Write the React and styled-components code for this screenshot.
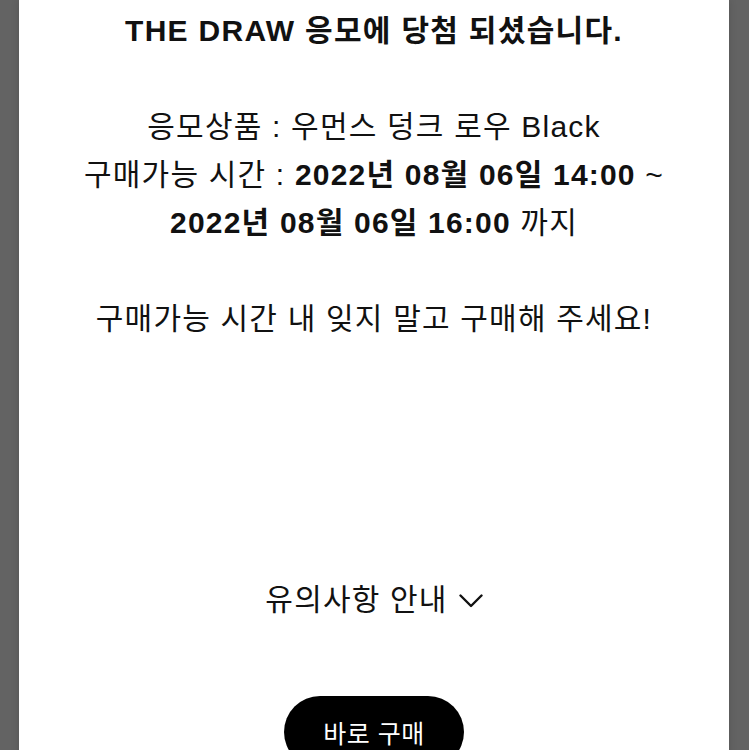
import React from 'react'
import styled, { createGlobalStyle } from 'styled-components'

const GlobalStyle = createGlobalStyle`
    html, body {
        margin: 0;
        height: 100%;
        overflow: hidden;
        background: #636363;
    }
    body {
        font-family: "Liberation Sans", "Noto Sans CJK KR", sans-serif;
        color: #111;
    }
`

function App() {
    return (
        <>
            <GlobalStyle />
            <Overlay>
                <Modal>
                    <Message>
                        <Title>THE DRAW 응모에 당첨 되셨습니다.</Title>
                        <Blank />
                        <Line>응모상품 : 우먼스 덩크 로우 Black</Line>
                        <Line>
                            구매가능 시간 : <strong>2022년 08월 06일 14:00</strong> ~
                        </Line>
                        <Line>
                            <strong>2022년 08월 06일 16:00</strong> 까지
                        </Line>
                        <Blank />
                        <Line>구매가능 시간 내 잊지 말고 구매해 주세요!</Line>
                    </Message>
                    <NoticeToggle>
                        유의사항 안내
                        <svg width="24" height="14" viewBox="0 0 24 14" fill="none">
                            <path d="M1.5 1.5 L12 12 L22.5 1.5" stroke="#111" strokeWidth="2.4" strokeLinecap="round" strokeLinejoin="round" />
                        </svg>
                    </NoticeToggle>
                    <BuyButton>바로 구매</BuyButton>
                </Modal>
            </Overlay>
        </>
    )
}

export default App

const Overlay = styled.div`
    height: 100vh;
    padding: 0 20px 0 19px;
    box-sizing: border-box;
`

const Modal = styled.div`
    background: #fff;
    min-height: 800px;
    display: flex;
    flex-direction: column;
    align-items: center;
    padding-top: 7px;
    box-shadow: 0 0 8px rgba(0, 0, 0, 0.14);
`

const Message = styled.div`
    text-align: center;
    font-size: 30px;
    line-height: 48px;
    letter-spacing: 1.2px;
    strong {
        font-weight: 700;
    }
`

const Title = styled.div`
    font-weight: 700;
    letter-spacing: 1.3px;
`

const Line = styled.div``

const Blank = styled.div`
    height: 48px;
`

const NoticeToggle = styled.button`
    margin-top: 233px;
    display: flex;
    align-items: center;
    gap: 11px;
    background: none;
    border: none;
    padding: 0;
    font-family: inherit;
    font-size: 30px;
    letter-spacing: 1.2px;
    line-height: 48px;
    color: #111;
    cursor: pointer;
    svg {
        margin-top: 2px;
    }
`

const BuyButton = styled.button`
    margin-top: 72px;
    width: 180px;
    height: 72px;
    border-radius: 36px;
    background: #000;
    color: #fff;
    border: none;
    font-family: inherit;
    font-size: 25px;
    letter-spacing: 0.5px;
    cursor: pointer;
`
